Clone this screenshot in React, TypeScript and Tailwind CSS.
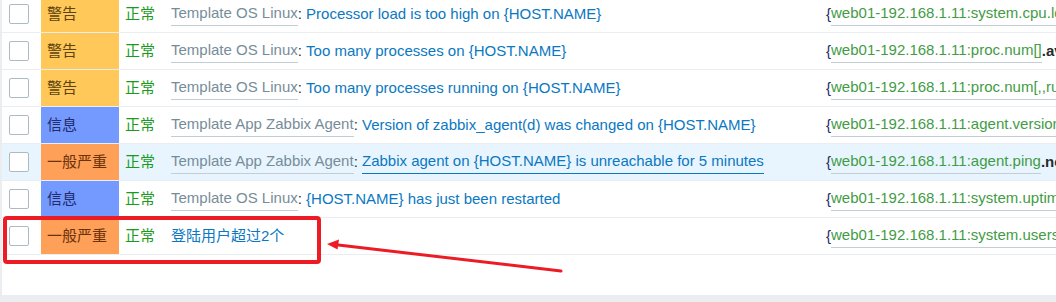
type Row = {
  severity: "warn" | "info" | "avg";
  template?: string;
  desc: string;
  item: string;
  fn: string;
  hover?: boolean;
};

const rows: Row[] = [
  { severity: "warn", template: "Template OS Linux", desc: "Processor load is too high on {HOST.NAME}", item: "system.cpu.load[percpu,avg1]", fn: ".last()}>5" },
  { severity: "warn", template: "Template OS Linux", desc: "Too many processes on {HOST.NAME}", item: "proc.num[]", fn: ".avg(5m)}>300" },
  { severity: "warn", template: "Template OS Linux", desc: "Too many processes running on {HOST.NAME}", item: "proc.num[,,run]", fn: ".avg(5m)}>30" },
  { severity: "info", template: "Template App Zabbix Agent", desc: "Version of zabbix_agent(d) was changed on {HOST.NAME}", item: "agent.version", fn: ".diff(0)}>0" },
  { severity: "avg", template: "Template App Zabbix Agent", desc: "Zabbix agent on {HOST.NAME} is unreachable for 5 minutes", item: "agent.ping", fn: ".nodata(5m)}=1", hover: true },
  { severity: "info", template: "Template OS Linux", desc: "{HOST.NAME} has just been restarted", item: "system.uptime", fn: ".change()}<0" },
  { severity: "avg", desc: "登陆用户超过2个", item: "system.users.num", fn: ".last()}>2" },
];

const sevStyle = {
  warn: { label: "警告", cls: "bg-[#ffc859] text-[#5c4310]" },
  info: { label: "信息", cls: "bg-[#7499ff] text-[#1f2c6e]" },
  avg: { label: "一般严重", cls: "bg-[#ffa059] text-[#6b3208]" },
};

function TriggerRow({ row }: { row: Row }) {
  const sev = sevStyle[row.severity];
  return (
    <div className={`flex h-[37px] border-b border-[#ebeef0] ${row.hover ? "bg-[#e8f5ff]" : ""}`}>
      <div className="flex w-[39px] shrink-0 items-center pl-[7px]">
        <div className="h-[20px] w-[20px] rounded-[2px] border border-[#acbbc2] bg-white" />
      </div>
      <div className={`flex w-[78px] shrink-0 items-center px-[6px] ${sev.cls}`}>{sev.label}</div>
      <div className="flex w-[52px] shrink-0 items-center pl-[6px] text-[#1a9c1a]">正常</div>
      <div className="flex w-[655px] shrink-0 items-center">
        {row.template && (
          <>
            <span className="border-b border-[#c3ced4] text-[#768d99]">{row.template}</span>
            <span className="text-[#1f2c33]">:&nbsp;</span>
          </>
        )}
        <span className={`text-[#0a78c2] ${row.hover ? "border-b border-[#0a78c2]" : ""}`}>{row.desc}</span>
      </div>
      <div className="flex items-center">
        <span className="text-[#1f2c6a]">{"{"}</span>
        <span className="border-b border-[#c3ced4] text-[#3f9c45]">web01-192.168.1.11:{row.item}</span>
        <span className="font-bold text-[#1f2c33]">{row.fn}</span>
      </div>
    </div>
  );
}

export default function App() {
  return (
    <div className="relative h-[302px] w-[1056px] overflow-hidden whitespace-nowrap bg-[#ebeef0] font-['Liberation_Sans','Noto_Sans_CJK_SC',sans-serif] text-[15px]">
      <div className="ml-[2px] h-[295px] overflow-hidden bg-white">
        <div className="-mt-[4px]">
          {rows.map((r, i) => (
            <TriggerRow key={i} row={r} />
          ))}
        </div>
      </div>

      {/* annotation */}
      <div className="absolute left-[3px] top-[216px] h-[48px] w-[318px] rounded-[4px] border-[4px] border-[#ec1c24]" />
      <svg className="absolute left-0 top-0" width="1056" height="302" viewBox="0 0 1056 302">
        <line x1="561" y1="271" x2="334" y2="244.5" stroke="#ec1c24" strokeWidth="3" strokeLinecap="round" />
        <polygon points="327,244 339,239.5 337.5,249.5" fill="#ec1c24" />
      </svg>
    </div>
  );
}
